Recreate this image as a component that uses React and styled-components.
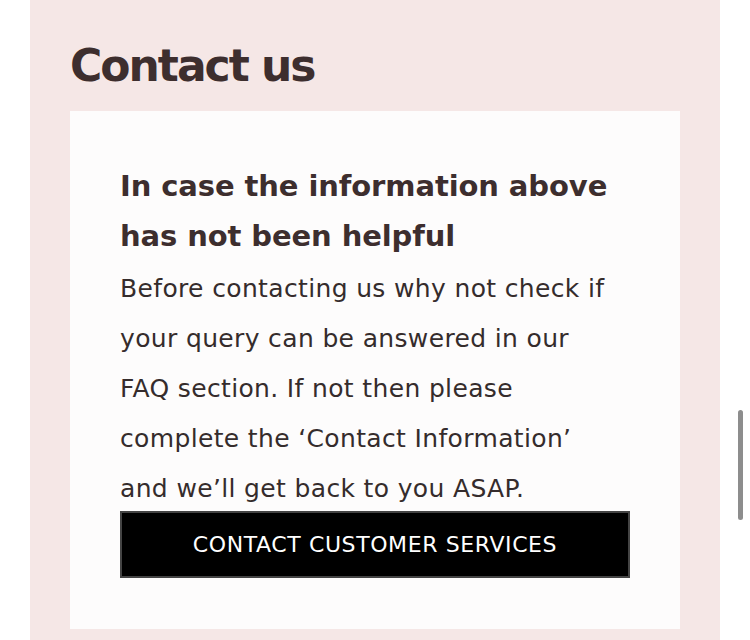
import React from "react";
import styled, { createGlobalStyle } from "styled-components";

const GlobalStyle = createGlobalStyle`
  body {
    margin: 0;
    background: #ffffff;
    font-family: "DejaVu Sans", "Open Sans", sans-serif;
    overflow: hidden;
  }
`;

const lines = [
  "Before contacting us why not check if",
  "your query can be answered in our",
  "FAQ section. If not then please",
  "complete the ‘Contact Information’",
  "and we’ll get back to you ASAP.",
];

function App() {
  return (
    <>
      <GlobalStyle />
      <Panel>
        <Title>Contact us</Title>
        <Card>
          <CardTitle>In case the information above has not been helpful</CardTitle>
          <CardText>
            {lines.map((line, i) => (
              <React.Fragment key={i}>
                {line}
                {i < lines.length - 1 && <br />}
              </React.Fragment>
            ))}
          </CardText>
          <ContactBtn type="button">CONTACT CUSTOMER SERVICES</ContactBtn>
        </Card>
      </Panel>
      <ScrollThumb />
    </>
  );
}

const Panel = styled.section`
  margin: 0 30px;
  padding: 38px 40px 0;
  background-color: #f5e7e6;
  min-height: 640px;
  box-sizing: border-box;
`;

const Title = styled.h1`
  margin: 0 0 18px;
  font-size: 44px;
  line-height: 55px;
  font-weight: 700;
  color: #3d2e2e;
  letter-spacing: -2px;
`;

const Card = styled.div`
  background-color: #fdfcfc;
  padding: 50px 50px 51px;
`;

const CardTitle = styled.h2`
  margin: 0 0 3px;
  font-size: 29px;
  line-height: 50px;
  font-weight: 700;
  color: #3d2e2e;
  letter-spacing: -0.1px;
  max-width: 500px;
`;

const CardText = styled.p`
  margin: 0;
  font-size: 25px;
  line-height: 50px;
  color: #352c2c;
  letter-spacing: 0.35px;
  white-space: nowrap;
`;

const ContactBtn = styled.button`
  display: block;
  width: 100%;
  height: 67px;
  margin-top: -3px;
  background: #000;
  border: 2px solid #444;
  color: #fff;
  font-family: inherit;
  font-size: 22px;
  letter-spacing: 0.6px;
  cursor: pointer;
`;

const ScrollThumb = styled.div`
  position: fixed;
  right: 7px;
  top: 410px;
  width: 5px;
  height: 110px;
  border-radius: 3px;
  background: #8d8d8d;
`;

export default App;
